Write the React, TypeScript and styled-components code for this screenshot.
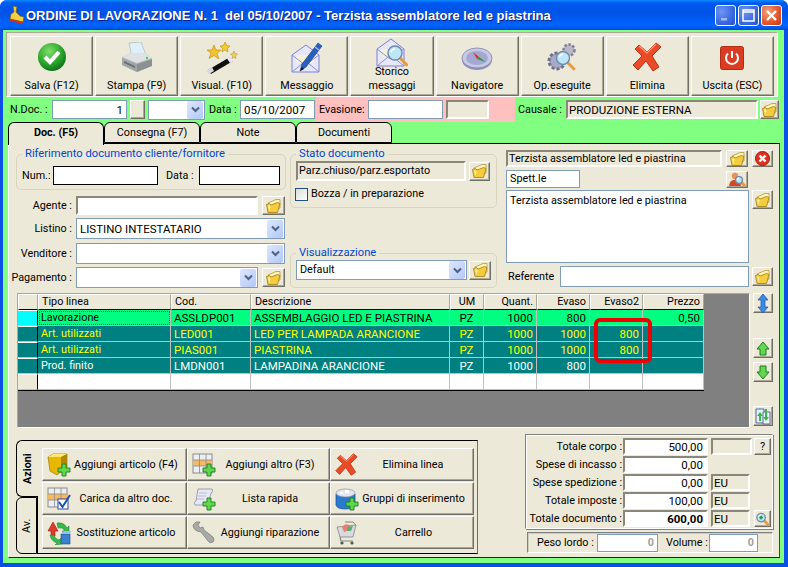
import React from 'react';
import styled, {createGlobalStyle, css} from 'styled-components';

const GlobalStyle = createGlobalStyle`
  html, body { margin: 0; padding: 0; background: #fff; }
  * { box-sizing: border-box; }
  body { font-family: Roboto, "Liberation Sans", Arial, sans-serif; font-size: 10.8px; line-height: 14px; color: #000; }
`;

const bevel = css`
  background: #ece9d8;
  border: 1px solid;
  border-color: #fff #716f64 #716f64 #fff;
  box-shadow: inset -1px -1px 0 #aca899;
`;
const sunken = css`
  border: 2px solid;
  border-color: #8a8778 #fff #fff #8a8778;
`;

const Window = styled.div`
  width: 788px;
  height: 567px;
  overflow: hidden;
  display: flex;
  flex-direction: column;
  border-radius: 7px 7px 0 0;
  background-color: #0a4fe6;
`;
const TitleBar = styled.div`
  height: 30px;
  flex: none;
  display: flex;
  align-items: center;
  padding: 0 6px 0 8px;
  background-image: linear-gradient(180deg, #0a8cff 0, #0058ee 10%, #0053e6 45%, #0064ff 85%, #0058f0 94%, #003dd0 100%);
`;
const TitleText = styled.div`
  flex: 1;
  margin-left: 1px;
  font: bold 13px "Liberation Sans", Arial, sans-serif;
  color: #fff;
  white-space: pre;
  text-shadow: 1px 1px 0 #0f1f80;
`;
const CaptionBtn = styled.div<{$red?: boolean}>`
  width: 21px;
  height: 21px;
  margin-left: 2px;
  border: 1px solid #fff;
  border-radius: 3px;
  display: flex;
  align-items: center;
  justify-content: center;
  background: ${p => p.$red
    ? 'radial-gradient(circle at 30% 30%, #f0a080, #e0562c 60%, #c23a14)'
    : 'radial-gradient(circle at 30% 30%, #6f96f2, #3a68e0 60%, #2a52c8)'};
`;
const Body = styled.div`
  flex: 1;
  min-height: 0;
  margin: 0 4px 4px 3px;
  padding: 2px 3px 5px 3px;
  background: #80ff80;
  display: flex;
  flex-direction: column;
`;
const Toolbar = styled.div`
  width: 772px;
  height: 65px;
  flex: none;
  background: #ece9d8;
  border: 1px solid;
  border-color: #aca899 #fff #fff #aca899;
  padding: 3px 3px 0;
  display: grid;
  grid-template-columns: repeat(9, 1fr);
  gap: 2px;
`;
const ToolBtn = styled.div`
  ${bevel};
  height: 60px;
  display: flex;
  flex-direction: column;
  align-items: center;
  justify-content: flex-end;
  padding-bottom: 2px;
  text-align: center;
`;
const ToolIcon = styled.div<{$gap: number}>`
  height: 32px;
  margin-bottom: ${p => p.$gap}px;
`;
const DocRow = styled.div`
  height: 25px;
  flex: none;
  display: flex;
  align-items: center;
  padding-left: 4px;
`;
const RowLabel = styled.div<{$w: number; $ml?: number}>`
  width: ${p => p.$w}px;
  margin-left: ${p => p.$ml || 0}px;
  flex: none;
  white-space: nowrap;
`;
const PinkZone = styled.div`
  width: 199px;
  height: 25px;
  margin-left: 1px;
  padding-left: 3px;
  flex: none;
  background: #ffc0c0;
  display: flex;
  align-items: center;
`;
const Field = styled.div<{$w?: number; $h?: number; $right?: boolean; $ml?: number; $top?: boolean; $large?: boolean}>`
  ${p => p.$w ? `width:${p.$w}px;flex:none;` : 'flex:1;min-width:0;'}
  height: ${p => p.$h || 19}px;
  margin-left: ${p => p.$ml || 0}px;
  padding: 0 3px;
  background: #fff;
  border: 1px solid #7f9db9;
  display: flex;
  align-items: ${p => p.$top ? 'flex-start' : 'center'};
  justify-content: ${p => p.$right ? 'flex-end' : 'flex-start'};
  white-space: nowrap;
  ${p => p.$large && 'font-size: 11.5px;'}
  ${p => p.$top && 'padding-top: 3px;'}
`;
const BlackField = styled(Field)`
  border-color: #000;
`;
const ReadOnly = styled(Field)`
  ${sunken};
  background: #ece9d8;
  padding: 0 1px;
`;
const WhiteSunken = styled(Field)`
  ${sunken};
`;
const Btn = styled.div<{$w: number; $h: number; $ml?: number}>`
  ${bevel};
  width: ${p => p.$w}px;
  height: ${p => p.$h}px;
  margin-left: ${p => p.$ml || 0}px;
  flex: none;
  display: flex;
  align-items: center;
  justify-content: center;
`;
const ComboBox = styled(Field)`
  padding: 0 1px 0 3px;
  justify-content: space-between;
`;
const ComboArrow = styled.div`
  width: 16px;
  height: 18px;
  margin-left: auto;
  flex: none;
  border-radius: 2px;
  background: linear-gradient(135deg, #dde6fd, #b3c8f8);
  display: flex;
  align-items: center;
  justify-content: center;
`;
const TabStrip = styled.div`
  height: 21px;
  flex: none;
  display: flex;
  padding-left: 2px;
`;
const Tab = styled.div<{$active?: boolean}>`
  width: 96px;
  background: #ece9d8;
  border: 1px solid #000;
  border-radius: 6px 6px 0 0;
  display: flex;
  align-items: center;
  justify-content: center;
  ${p => p.$active && `
    font-weight: bold;
    border-bottom: 0;
    margin-bottom: -2px;
    z-index: 1;
    padding-bottom: 2px;
  `}
`;
const Page = styled.div`
  width: 772px;
  height: 415px;
  margin-left: 2px;
  flex: none;
  background: #ece9d8;
  border: 1px solid;
  border-color: #000 #404040 #202020 #fff;
  display: flex;
  flex-direction: column;
  padding-left: 7px;
`;
const FormArea = styled.div`
  height: 145px;
  flex: none;
  display: flex;
`;
const LeftCol = styled.div`
  width: 269px;
  padding-top: 3px;
  flex: none;
  display: flex;
  flex-direction: column;
`;
const MidCol = styled.div`
  width: 207px;
  margin-left: 5px;
  padding-top: 3px;
  flex: none;
  display: flex;
  flex-direction: column;
`;
const RightCol = styled.div`
  width: 267px;
  margin-left: 9px;
  padding-top: 6px;
  flex: none;
  display: flex;
  flex-direction: column;
`;
const Group = styled.fieldset<{$h: number; $mt?: number}>`
  margin: ${p => p.$mt || 0}px 0 0;
  height: ${p => p.$h}px;
  padding: 0 5px;
  border: 1px solid #d8d4c0;
  border-radius: 5px;
  flex: none;
`;
const GroupLegend = styled.legend`
  padding: 0 3px;
  font-size: 11.2px;
  color: #0046d5;
`;
const FlexRow = styled.div<{$mt?: number; $h?: number}>`
  display: flex;
  align-items: ${p => p.$h ? 'flex-start' : 'center'};
  margin-top: ${p => p.$mt || 0}px;
  ${p => p.$h && `height:${p.$h}px;`}
`;
const FormLabel = styled.div`
  width: 60px;
  flex: none;
  padding-right: 4px;
  display: flex;
  justify-content: flex-end;
  white-space: nowrap;
`;
const CheckBox = styled.div`
  width: 13px;
  height: 13px;
  flex: none;
  background: linear-gradient(135deg, #dcdcd7, #fff);
  border: 1px solid #1c5180;
  margin: 0 3px 0 -1px;
`;
const TableArea = styled.div`
  height: 135px;
  flex: none;
  margin: 4px 0 0 1px;
  display: flex;
`;
const GridPanel = styled.div`
  position: relative;
  width: 733px;
  background: #808080;
  border: 1px solid;
  border-color: #aca899 #fff #fff #aca899;
`;
const DataGrid = styled.div`
  width: 686px;
  display: grid;
  grid-template-columns: 20px 133px 80px 199px 34px 53px 53px 53px 61px;
  grid-auto-rows: 16px;
  background: #fff;
  border-right: 1px solid #000;
  border-bottom: 1px solid #000;
`;
const HeadCell = styled.div<{$align?: string}>`
  ${bevel};
  box-shadow: none;
  border-color: #fff #aca899 #000 #fff;
  padding: 0 3px;
  display: flex;
  align-items: center;
  justify-content: ${p => p.$align || 'flex-start'};
`;
const Indicator = styled.div<{$bg: string}>`
  background: ${p => p.$bg};
  border-top: 1px solid #fff;
  border-bottom: 1px solid #c0c0c0;
  border-right: 1px solid #000;
`;
const rowColors = {
  green: {bg: '#00ff80', fg: '#000'},
  yellow: {bg: '#008080', fg: '#ffff00'},
  white: {bg: '#008080', fg: '#fff'},
  empty: {bg: '#fff', fg: '#000'},
};
const Cell = styled.div<{$kind: keyof typeof rowColors; $right?: boolean; $center?: boolean; $focus?: boolean; $large?: boolean}>`
  background: ${p => rowColors[p.$kind].bg};
  color: ${p => rowColors[p.$kind].fg};
  border-right: 1px solid #c0c0c0;
  border-bottom: 1px solid #c0c0c0;
  padding: 0 3px;
  display: flex;
  align-items: center;
  white-space: nowrap;
  overflow: hidden;
  justify-content: ${p => p.$right ? 'flex-end' : p.$center ? 'center' : 'flex-start'};
  ${p => p.$large && 'font-size: 11.5px;'}
  ${p => p.$focus && 'outline: 1px dotted #ff0060; outline-offset: -2px;'}
`;
const Highlight = styled.div`
  position: absolute;
  left: 576px;
  top: 24px;
  width: 58px;
  height: 45px;
  border: 4px solid #f00000;
  border-radius: 6px;
`;
const SideButtons = styled.div`
  margin-left: 3px;
  display: flex;
  flex-direction: column;
`;
const SideBtn = styled(Btn)<{$mt?: number}>`
  margin-top: ${p => p.$mt || 0}px;
`;
const BottomArea = styled.div`
  margin: 6px 0 0;
  height: 120px;
  flex: none;
  display: flex;
`;
const ActionBlock = styled.div`
  width: 462px;
  height: 114px;
  margin-top: 6px;
  flex: none;
  display: flex;
`;
const SideTabs = styled.div`
  width: 21px;
  flex: none;
  display: flex;
  flex-direction: column;
`;
const SideTab = styled.div<{$active?: boolean}>`
  height: 57px;
  border: 1px solid #000;
  background: #ece9d8;
  writing-mode: vertical-rl;
  transform: rotate(180deg);
  transform-origin: center;
  display: flex;
  align-items: center;
  justify-content: center;
  border-radius: 0 6px 6px 0;
  ${p => p.$active ? 'font-weight: bold; border-left: 0; margin-right: -1px; z-index: 1; width: 22px;' : ''}
`;
const ActionPanel = styled.div`
  flex: 1;
  border: 1px solid;
  border-color: #000 #716f64 #000 #000;
  padding: 7px 2px 0 4px;
  display: grid;
  grid-template-columns: 145px 143px 144px;
  grid-auto-rows: 33px;
  gap: 1px 0;
`;
const ActionBtn = styled.div`
  ${bevel};
  display: flex;
  align-items: center;
  padding: 0 5px 0 4px;
  white-space: nowrap;
`;
const ActionText = styled.div`
  flex: 1;
  text-align: center;
`;
const TotalsCol = styled.div`
  margin-left: 47px;
  width: 248px;
  flex: none;
  display: flex;
  flex-direction: column;
`;
const TotalsBox = styled.div`
  height: 95px;
  border: 1px solid;
  border-color: #808080 #fff #fff #808080;
  box-shadow: inset 1px 1px 0 #fff, 1px 1px 0 #808080;
  padding: 3px 0 0;
  display: flex;
  flex-direction: column;
  gap: 1px;
`;
const TotalRow = styled.div`
  height: 17px;
  display: flex;
  align-items: center;
`;
const TotalLabel = styled.div`
  width: 97px;
  flex: none;
  display: flex;
  justify-content: flex-end;
  white-space: nowrap;
  padding-right: 1px;
`;
const BoldValue = styled.b`
  font-weight: bold;
`;
const WeightBox = styled.div`
  height: 21px;
  width: 246px;
  margin: 3px 0 0 2px;
  border: 1px solid;
  border-color: #808080 #fff #fff #808080;
  box-shadow: inset 1px 1px 0 #d0cdb8;
  display: flex;
  align-items: center;
  padding-left: 9px;
`;
const GreyValue = styled.span`
  color: #a0a0a0;
  font-weight: bold;
`;

function Folder() {
  return (
    <svg width="17" height="16" viewBox="0 0 17 16">
      <path d="M3 5 L11 1.5 L15 1.5 L15 10 L7 13 Z" fill="#fff4b8" stroke="#b08a20" strokeWidth=".7"/>
      <path d="M1.5 6.5 L3 14.5 L12.5 14.5 L15 5.5 L12.5 4.5 L6 7 L4.5 5.5 Z" fill="#f5cd3c" stroke="#a07c14" strokeWidth=".8"/>
      <path d="M3 7.5 L5.5 8 L4.5 13 Z" fill="#fff2b0"/>
    </svg>
  );
}

function Chevron() {
  return (
    <svg width="9" height="7" viewBox="0 0 9 7">
      <path d="M1 1.5 L4.5 5 L8 1.5" fill="none" stroke="#4d6185" strokeWidth="2"/>
    </svg>
  );
}

function CheckIcon() {
  return (
    <svg width="30" height="30" viewBox="0 0 30 30">
      <defs>
        <radialGradient id="chk" cx="40%" cy="30%" r="75%">
          <stop offset="0" stopColor="#7fe06a"/>
          <stop offset=".6" stopColor="#2aa52a"/>
          <stop offset="1" stopColor="#0b6b1a"/>
        </radialGradient>
      </defs>
      <circle cx="15" cy="15" r="14" fill="url(#chk)"/>
      <path d="M8 15 L13 20 L22 10" fill="none" stroke="#fff" strokeWidth="4"/>
    </svg>
  );
}

function PrinterIcon() {
  return (
    <svg width="32" height="32" viewBox="0 0 32 32">
      <path d="M8 1 L20 0 L25 13 L11 15 Z" fill="#dff0fb" stroke="#9fb0c0" strokeWidth=".6"/>
      <path d="M1 15 L10 11 L24 11 L31 16 L31 24 L16 30 L1 23 Z" fill="#b9bcbf"/>
      <path d="M1 15 L16 21 L31 16 L24 11 L10 11 Z" fill="#dfe1e3"/>
      <path d="M1 16 L16 22 L16 30 L1 23 Z" fill="#a2a5a8"/>
      <path d="M16 22 L31 17 L31 24 L16 30 Z" fill="#8d9093"/>
      <path d="M3 19 L14 24 L14 26 L3 21 Z" fill="#6c6f72"/>
      <circle cx="26" cy="16" r="1.2" fill="#3fd04a"/>
    </svg>
  );
}

function WandIcon() {
  return (
    <svg width="32" height="32" viewBox="0 0 32 32">
      <path d="M2 28 L24 15 L27 19 L5 32 Z" fill="#111"/>
      <path d="M0 29 L6 25 L8 29 L3 32 Z" fill="#d8d8e0"/>
      <path d="M21 16.5 L25 14 L28 18.5 L24 21 Z" fill="#e8e8f0"/>
      <path d="M8 3 L10 8 L15 8 L11 11.5 L13 17 L8 13.5 L3 16.5 L5 11 L1 8 L6 8 Z" fill="#f4c22c" stroke="#b78a10" strokeWidth=".6"/>
      <path d="M19 0 L20.5 3.5 L24 4 L21.5 6.5 L22 10 L19 8 L16 10 L16.5 6.5 L14 4 L17.5 3.5 Z" fill="#f6ca34" stroke="#b78a10" strokeWidth=".6"/>
      <path d="M28 9 L29 11.5 L31.5 12 L29.5 14 L30 16.5 L28 15 L26 16.5 L26.5 14 L24.5 12 L27 11.5 Z" fill="#f0d060" stroke="#b78a10" strokeWidth=".5"/>
    </svg>
  );
}

function EnvelopeBase() {
  return (
    <>
      <path d="M1 13 L15 3 L28 13 L28 30 L1 30 Z" fill="#e6e8fa" stroke="#7c80d8" strokeWidth="1"/>
      <path d="M5 13 L23 13 L23 20 L14 24 L5 20 Z" fill="#f7f1d8"/>
      <path d="M1 13 L14 23 L28 13 M1 30 L12 21 M28 30 L17 21" fill="none" stroke="#8a8fe0" strokeWidth="1"/>
    </>
  );
}

function MessageIcon() {
  return (
    <svg width="32" height="32" viewBox="0 0 32 32">
      <EnvelopeBase/>
      <path d="M9 29 L11 22 L27 1 L31 4 L15 25 Z" fill="#2a5fc0" stroke="#123a80" strokeWidth=".6"/>
      <path d="M24 5 L28 8" stroke="#9fc0f0" strokeWidth="1.2"/>
      <path d="M9 29 L11 25 L13 27 Z" fill="#111"/>
    </svg>
  );
}

function Lens({cx, cy, r}: {cx: number; cy: number; r: number}) {
  return (
    <>
      <path d={`M${cx + r * .7} ${cy + r * .7} L${cx + r * 1.8} ${cy + r * 1.8}`} stroke="#e89a40" strokeWidth="3"/>
      <circle cx={cx} cy={cy} r={r} fill="#bfe6f6" stroke="#6e8aa8" strokeWidth="1.4"/>
      <path d={`M${cx - r * .6} ${cy - r * .1} Q${cx - r * .4} ${cy - r * .6} ${cx} ${cy - r * .6}`} stroke="#fff" strokeWidth="1.2" fill="none"/>
    </>
  );
}

function StoricoIcon() {
  return (
    <svg width="32" height="32" viewBox="0 0 32 32">
      <EnvelopeBase/>
      <Lens cx={19} cy={17} r={7}/>
    </svg>
  );
}

function CompassIcon() {
  return (
    <svg width="32" height="32" viewBox="0 0 32 32">
      <ellipse cx="16" cy="18" rx="15" ry="10" fill="#8f90c0"/>
      <ellipse cx="16" cy="16" rx="15" ry="10" fill="#c8c9e4" stroke="#8284b0" strokeWidth=".8"/>
      <ellipse cx="16" cy="16" rx="11" ry="7" fill="#a6a8d2"/>
      <path d="M12 10 L18 15 L16 17 Z" fill="#d83020"/>
      <path d="M18 15 L25 20 L16 17 Z" fill="#1e9a3c"/>
    </svg>
  );
}

function GearsIcon() {
  return (
    <svg width="32" height="32" viewBox="0 0 32 32">
      <circle cx="11" cy="19" r="8" fill="#a8a9c8" stroke="#6e7090" strokeWidth="3" strokeDasharray="3 2"/>
      <circle cx="23" cy="8" r="5.5" fill="#b8b8c8" stroke="#808098" strokeWidth="2.5" strokeDasharray="2.5 1.6"/>
      <Lens cx={17} cy={16} r={6.5}/>
    </svg>
  );
}

function RedX({size = 30}: {size?: number}) {
  return (
    <svg width={size} height={size} viewBox="0 0 30 30">
      <path d="M7 3 L15 10 L24 1 L29 5 L20 14 L27 25 L21 29 L14 19 L6 28 L1 23 L10 14 L3 7 Z" fill="#ea4a28" stroke="#b83214" strokeWidth="1"/>
      <path d="M7 4 L15 11 L24 2" fill="none" stroke="#ff9a78" strokeWidth="1.2"/>
    </svg>
  );
}

function PowerIcon() {
  return (
    <svg width="24" height="24" viewBox="0 0 24 24">
      <rect x=".5" y=".5" width="23" height="23" rx="2" fill="#dc3c22" stroke="#b02c14"/>
      <path d="M8 7.5 A6 6 0 1 0 16 7.5" fill="none" stroke="#fff" strokeWidth="2"/>
      <path d="M12 5 V12" stroke="#fff" strokeWidth="2"/>
    </svg>
  );
}

function Plus({x, y}: {x: number; y: number}) {
  return (
    <path
      d={`M${x + 4} ${y} h4 v4 h4 v4 h-4 v4 h-4 v-4 h-4 v-4 h4 Z`}
      fill="#5ed84a"
      stroke="#1c7a20"
      strokeWidth=".9"
    />
  );
}

function BoxPlus() {
  return (
    <svg width="24" height="24" viewBox="0 0 24 24">
      <path d="M1 4 L6 1 L20 1 L20 14 L10 22 L3 18 Z" fill="#e8b800" stroke="#9c7a00" strokeWidth=".7"/>
      <path d="M1 4 L14 4 L20 1 L6 1 Z" fill="#ffe878"/>
      <path d="M14 4 L14 20 L20 14 L20 1 Z" fill="#b08800"/>
      <Plus x={11} y={11}/>
    </svg>
  );
}

function TableBase() {
  return (
    <>
      <rect x="1" y="1" width="19" height="19" fill="#eceef4" stroke="#8a8a8a"/>
      <rect x="1" y="7" width="19" height="6" fill="#f6b860"/>
      <path d="M7.5 1 V20 M14 1 V20 M1 7 H20 M1 13 H20" stroke="#8a8a8a" strokeWidth=".8"/>
    </>
  );
}

function TablePlus() {
  return (
    <svg width="24" height="24" viewBox="0 0 24 24">
      <TableBase/>
      <Plus x={11} y={11}/>
    </svg>
  );
}

function TableCheck() {
  return (
    <svg width="24" height="24" viewBox="0 0 24 24">
      <TableBase/>
      <rect x="11" y="12" width="10" height="10" fill="#fff" stroke="#2a4a9c"/>
      <path d="M12 15 L15.5 20 L23 8" fill="none" stroke="#1c50b8" strokeWidth="2"/>
    </svg>
  );
}

function ScrollPlus() {
  return (
    <svg width="24" height="24" viewBox="0 0 24 24">
      <path d="M6 2 L20 2 Q22 5 19 6 L16 18 L3 18 Q1 15 4 14 Z" fill="#e6e8f4" stroke="#8a8ca8" strokeWidth=".8"/>
      <path d="M7 6 H15 M6 9 H14 M5 12 H12" stroke="#b0b2c8" strokeWidth=".8"/>
      <Plus x={11} y={11}/>
    </svg>
  );
}

function BucketPlus() {
  return (
    <svg width="24" height="24" viewBox="0 0 24 24">
      <path d="M1 7 L20 7 L20 18 Q18 22 10 22 Q2 22 1 18 Z" fill="#2a7ad0" stroke="#144a90" strokeWidth=".7"/>
      <ellipse cx="10.5" cy="6" rx="9.5" ry="4" fill="#e4e6ee" stroke="#8a90a8" strokeWidth=".7"/>
      <path d="M5 5 h3 v2 h-3z M10 3 h4 v3 h-4z" fill="#fff"/>
      <Plus x={11} y={11}/>
    </svg>
  );
}

function SwapIcon() {
  return (
    <svg width="24" height="24" viewBox="0 0 24 24">
      <path d="M1 10 L6 1 L11 10 L8 10 L8 15 L4 15 L4 10 Z" fill="#e23a28" stroke="#981c10" strokeWidth=".6"/>
      <path d="M10 2 Q17 1 20 7 L22 5 L22 12 L15 11 L17.5 9 Q15 6 11 7 Z" fill="#38b848" stroke="#1a7a28" strokeWidth=".5"/>
      <path d="M3 14 Q4 20 10 22 L8 24 L15 23 L14 17 L12 19 Q8 18 7 14 Z" fill="#38b848" stroke="#1a7a28" strokeWidth=".5"/>
      <path d="M14 13 L23 13 L23 23 L14 23 Z" fill="#3a80d0" stroke="#1a4a90" strokeWidth=".6"/>
      <path d="M14 13 L17 10 L24 10 L23 13 Z" fill="#90c0f0"/>
    </svg>
  );
}

function WrenchIcon() {
  return (
    <svg width="24" height="24" viewBox="0 0 24 24">
      <path d="M1 4 L4 1 L8 1 L6 4 L8 7 L11 6 L12 9 L21 16 Q23 19 21 21 Q18 23 16 20 L9 11 L5 10 Q1 8 1 4 Z" fill="#a8aaa8" stroke="#767876" strokeWidth=".7"/>
    </svg>
  );
}

function CartIcon() {
  return (
    <svg width="24" height="24" viewBox="0 0 24 24">
      <path d="M2 6 L21 4 L18 16 L5 16 Z" fill="#d8dae0" stroke="#84868c" strokeWidth=".8"/>
      <path d="M7 6 Q10 2 14 4 L17 8 L9 11 Z" fill="#e88070"/>
      <path d="M12 6 L18 5 L16 10 L12 10 Z" fill="#58b070"/>
      <path d="M21 4 L18 1 L10 1" fill="none" stroke="#84868c" strokeWidth="1"/>
      <path d="M5 16 L6 20 H18" fill="none" stroke="#84868c" strokeWidth="1.2"/>
      <circle cx="7" cy="22" r="1.6" fill="#555"/>
      <circle cx="17" cy="22" r="1.6" fill="#555"/>
    </svg>
  );
}

function ArrowBlue() {
  return (
    <svg width="12" height="19" viewBox="0 0 12 19">
      <path d="M6 0 L11 6 L8 6 L8 13 L11 13 L6 19 L1 13 L4 13 L4 6 L1 6 Z" fill="#3a8ae8" stroke="#1a50a8" strokeWidth=".7"/>
    </svg>
  );
}

function ArrowGreen({down}: {down?: boolean}) {
  return (
    <svg width="14" height="15" viewBox="0 0 14 15">
      <path
        d={down ? 'M4 1 H10 V7 H13 L7 14 L1 7 H4 Z' : 'M7 1 L13 8 H10 V14 H4 V8 H1 Z'}
        fill="#62d84e"
        stroke="#1c7a20"
      />
    </svg>
  );
}

function SyncIcon() {
  return (
    <svg width="16" height="18" viewBox="0 0 16 18">
      <path d="M1 2 H9 V16 H1 Z" fill="#e8f0fa" stroke="#4a6a9a"/>
      <path d="M8 5 H15 V17 H8 Z" fill="#f4f8fc" stroke="#4a6a9a"/>
      <path d="M5 5 L8 9 H6 V14 H4 V9 H2 Z" fill="#38b848"/>
      <path d="M11 14 L8 10 H10 V2 H12 V10 H14 Z" fill="#38b848"/>
    </svg>
  );
}

function PersonIcon() {
  return (
    <svg width="17" height="15" viewBox="0 0 17 15">
      <circle cx="6" cy="4" r="3.2" fill="#e89060"/>
      <path d="M0 14 Q1 7 6 8 Q11 7 12 14 Z" fill="#d04a28"/>
      <Lens cx={10} cy={8} r={3.4}/>
    </svg>
  );
}

function RedCircleX() {
  return (
    <svg width="15" height="15" viewBox="0 0 15 15">
      <circle cx="7.5" cy="7.5" r="7" fill="#e03020" stroke="#a01810"/>
      <path d="M4.5 4.5 L10.5 10.5 M10.5 4.5 L4.5 10.5" stroke="#fff" strokeWidth="2.4"/>
    </svg>
  );
}

function SmallZoom() {
  return (
    <svg width="16" height="16" viewBox="0 0 16 16">
      <Lens cx={6.5} cy={6.5} r={4.5}/>
      <path d="M4.5 6.5 H8.5 M6.5 4.5 V8.5" stroke="#1c9a30" strokeWidth="1.6"/>
    </svg>
  );
}

function AppIcon() {
  return (
    <svg width="17" height="20" viewBox="0 0 17 20">
      <path d="M5 1 L9 2 L8 7 L12 11 L16 12 L15 17 L2 14 L3 9 L6 7 Z" fill="#f0d040" stroke="#7a5a10" strokeWidth=".7"/>
      <path d="M2 14 L15 17 L14 19 L2 16 Z" fill="#d03020"/>
    </svg>
  );
}

const tools = [
  {icon: <CheckIcon/>, label: 'Salva (F12)', gap: 5},
  {icon: <PrinterIcon/>, label: 'Stampa (F9)', gap: 5},
  {icon: <WandIcon/>, label: 'Visual. (F10)', gap: 5},
  {icon: <MessageIcon/>, label: 'Messaggio', gap: 5},
  {icon: <StoricoIcon/>, label: <>Storico<br/>messaggi</>, gap: -3},
  {icon: <CompassIcon/>, label: 'Navigatore', gap: 5},
  {icon: <GearsIcon/>, label: 'Op.eseguite', gap: 5},
  {icon: <RedX/>, label: 'Elimina', gap: 5},
  {icon: <PowerIcon/>, label: 'Uscita (ESC)', gap: 1},
];

const actions = [
  {icon: <BoxPlus/>, label: 'Aggiungi articolo (F4)'},
  {icon: <TablePlus/>, label: 'Aggiungi altro (F3)'},
  {icon: <RedX size={23}/>, label: 'Elimina linea'},
  {icon: <TableCheck/>, label: 'Carica da altro doc.'},
  {icon: <ScrollPlus/>, label: 'Lista rapida'},
  {icon: <BucketPlus/>, label: 'Gruppi di inserimento'},
  {icon: <SwapIcon/>, label: 'Sostituzione articolo'},
  {icon: <WrenchIcon/>, label: 'Aggiungi riparazione'},
  {icon: <CartIcon/>, label: 'Carrello'},
];

type Kind = keyof typeof rowColors;
const rows: {kind: Kind; mark: string; vals: string[]}[] = [
  {kind: 'green', mark: '#00ffff', vals: ['Lavorazione', 'ASSLDP001', 'ASSEMBLAGGIO LED E PIASTRINA', 'PZ', '1000', '800', '', '0,50']},
  {kind: 'yellow', mark: '#008080', vals: ['Art. utilizzati', 'LED001', 'LED PER LAMPADA ARANCIONE', 'PZ', '1000', '1000', '800', '']},
  {kind: 'yellow', mark: '#008080', vals: ['Art. utilizzati', 'PIAS001', 'PIASTRINA', 'PZ', '1000', '1000', '800', '']},
  {kind: 'white', mark: '#008080', vals: ['Prod. finito', 'LMDN001', 'LAMPADINA ARANCIONE', 'PZ', '1000', '800', '', '']},
  {kind: 'empty', mark: '#ece9d8', vals: ['', '', '', '', '', '', '', '']},
];
const headers = ['Tipo linea', 'Cod.', 'Descrizione', 'UM', 'Quant.', 'Evaso', 'Evaso2', 'Prezzo'];

function App() {
  return (
    <>
      <GlobalStyle/>
      <Window>
        <TitleBar>
          <AppIcon/>
          <TitleText>ORDINE DI LAVORAZIONE N. 1  del 05/10/2007 - Terzista assemblatore led e piastrina</TitleText>
          <CaptionBtn>
            <svg width="11" height="11" viewBox="0 0 11 11"><rect x="1" y="8" width="6" height="2.5" fill="#9fb8f0"/></svg>
          </CaptionBtn>
          <CaptionBtn>
            <svg width="13" height="13" viewBox="0 0 13 13"><path d="M1 1 H12 V12 H1 Z M1 3 H12" fill="none" stroke="#fff" strokeWidth="1.5"/></svg>
          </CaptionBtn>
          <CaptionBtn $red>
            <svg width="13" height="13" viewBox="0 0 13 13"><path d="M2 2 L11 11 M11 2 L2 11" stroke="#fff" strokeWidth="2.4"/></svg>
          </CaptionBtn>
        </TitleBar>
        <Body>
          <Toolbar>
            {tools.map((t, i) => (
              <ToolBtn key={i}>
                <ToolIcon $gap={t.gap}>{t.icon}</ToolIcon>
                <div>{t.label}</div>
              </ToolBtn>
            ))}
          </Toolbar>
          <DocRow>
            <RowLabel $w={42}>N.Doc. :</RowLabel>
            <Field $w={75} $right $large>1</Field>
            <Btn $w={15} $h={19} $ml={3}/>
            <ComboBox $w={57} $h={20} $ml={3}><ComboArrow><Chevron/></ComboArrow></ComboBox>
            <RowLabel $w={31} $ml={4}>Data :</RowLabel>
            <Field $w={75} $large>05/10/2007</Field>
            <PinkZone>
              <RowLabel $w={49}>Evasione:</RowLabel>
              <Field $w={75}/>
              <ReadOnly $w={43} $ml={3}/>
            </PinkZone>
            <RowLabel $w={48} $ml={3}>Causale :</RowLabel>
            <ReadOnly $w={192} $large>PRODUZIONE ESTERNA</ReadOnly>
            <Btn $w={19} $h={19} $ml={2}><Folder/></Btn>
          </DocRow>
          <TabStrip>
            <Tab $active>Doc. (F5)</Tab>
            <Tab>Consegna (F7)</Tab>
            <Tab>Note</Tab>
            <Tab>Documenti</Tab>
          </TabStrip>
          <Page>
            <FormArea>
              <LeftCol>
                <Group $h={43}>
                  <GroupLegend>Riferimento documento cliente/fornitore</GroupLegend>
                  <FlexRow $mt={5}>
                    <RowLabel $w={31}>Num.:</RowLabel>
                    <BlackField $w={105}/>
                    <RowLabel $w={33} $ml={8}>Data :</RowLabel>
                    <BlackField $w={81}/>
                  </FlexRow>
                </Group>
                <FlexRow $mt={6}>
                  <FormLabel>Agente :</FormLabel>
                  <WhiteSunken/>
                  <Btn $w={23} $h={19} $ml={4}><Folder/></Btn>
                </FlexRow>
                <FlexRow $mt={3}>
                  <FormLabel>Listino :</FormLabel>
                  <ComboBox $h={21} $large>LISTINO INTESTATARIO<ComboArrow><Chevron/></ComboArrow></ComboBox>
                </FlexRow>
                <FlexRow $mt={4}>
                  <FormLabel>Venditore :</FormLabel>
                  <ComboBox $h={21}><ComboArrow><Chevron/></ComboArrow></ComboBox>
                </FlexRow>
                <FlexRow $mt={3}>
                  <FormLabel>Pagamento :</FormLabel>
                  <ComboBox $h={21}><ComboArrow><Chevron/></ComboArrow></ComboBox>
                  <Btn $w={23} $h={19} $ml={4}><Folder/></Btn>
                </FlexRow>
              </LeftCol>
              <MidCol>
                <Group $h={61}>
                  <GroupLegend>Stato documento</GroupLegend>
                  <FlexRow $mt={0}>
                    <ReadOnly $w={170} $h={20}>Parz.chiuso/parz.esportato</ReadOnly>
                    <Btn $w={21} $h={19} $ml={3}><Folder/></Btn>
                  </FlexRow>
                  <FlexRow $mt={6}>
                    <CheckBox/>
                    <span>Bozza / in preparazione</span>
                  </FlexRow>
                </Group>
                <Group $h={42} $mt={38}>
                  <GroupLegend>Visualizzazione</GroupLegend>
                  <FlexRow>
                    <ComboBox $h={20}>Default<ComboArrow><Chevron/></ComboArrow></ComboBox>
                    <Btn $w={22} $h={19} $ml={2}><Folder/></Btn>
                  </FlexRow>
                </Group>
              </MidCol>
              <RightCol>
                <FlexRow>
                  <ReadOnly $w={216} $h={17}>Terzista assemblatore led e piastrina</ReadOnly>
                  <Btn $w={22} $h={17} $ml={4}><Folder/></Btn>
                  <Btn $w={21} $h={17} $ml={4}><RedCircleX/></Btn>
                </FlexRow>
                <FlexRow $mt={3}>
                  <Field $w={74} $h={18}>Spett.le</Field>
                  <Btn $w={22} $h={17} $ml={146}><PersonIcon/></Btn>
                </FlexRow>
                <FlexRow $mt={2} $h={73}>
                  <Field $w={243} $h={73} $top>Terzista assemblatore led e piastrina</Field>
                  <Btn $w={21} $h={19} $ml={3}><Folder/></Btn>
                </FlexRow>
                <FlexRow $mt={3}>
                  <RowLabel $w={52} $ml={2}>Referente</RowLabel>
                  <Field $w={189} $h={21}/>
                  <Btn $w={21} $h={19} $ml={3}><Folder/></Btn>
                </FlexRow>
              </RightCol>
            </FormArea>
            <TableArea>
              <GridPanel>
                <DataGrid>
                  <HeadCell/>
                  {headers.map((h, i) => (
                    <HeadCell key={h} $align={i > 3 ? 'flex-end' : i === 3 ? 'center' : undefined}>{h}</HeadCell>
                  ))}
                  {rows.map((r, ri) => (
                    <React.Fragment key={ri}>
                      <Indicator $bg={r.mark}/>
                      {r.vals.map((v, ci) => (
                        <Cell
                          key={ci}
                          $kind={r.kind}
                          $large={ci > 0}
                          $right={ci > 3}
                          $center={ci === 3}
                          $focus={ri === 0 && ci === 0}
                        >
                          {v}
                        </Cell>
                      ))}
                    </React.Fragment>
                  ))}
                </DataGrid>
                <Highlight/>
              </GridPanel>
              <SideButtons>
                <SideBtn $w={20} $h={20}><ArrowBlue/></SideBtn>
                <SideBtn $w={20} $h={20} $mt={25}><ArrowGreen/></SideBtn>
                <SideBtn $w={20} $h={20} $mt={4}><ArrowGreen down/></SideBtn>
                <SideBtn $w={20} $h={20} $mt={24}><SyncIcon/></SideBtn>
              </SideButtons>
            </TableArea>
            <BottomArea>
              <ActionBlock>
                <SideTabs>
                  <SideTab $active>Azioni</SideTab>
                  <SideTab>Av.</SideTab>
                </SideTabs>
                <ActionPanel>
                  {actions.map(a => (
                    <ActionBtn key={a.label}>
                      {a.icon}
                      <ActionText>{a.label}</ActionText>
                    </ActionBtn>
                  ))}
                </ActionPanel>
              </ActionBlock>
              <TotalsCol>
                <TotalsBox>
                  <TotalRow>
                    <TotalLabel>Totale corpo :</TotalLabel>
                    <WhiteSunken $w={85} $h={17} $right $large>500,00</WhiteSunken>
                    <ReadOnly $w={41} $h={17} $ml={3}/>
                    <Btn $w={17} $h={17} $ml={2}>?</Btn>
                  </TotalRow>
                  <TotalRow>
                    <TotalLabel>Spese di incasso :</TotalLabel>
                    <WhiteSunken $w={85} $h={17} $right $large>0,00</WhiteSunken>
                  </TotalRow>
                  <TotalRow>
                    <TotalLabel>Spese spedizione :</TotalLabel>
                    <WhiteSunken $w={85} $h={17} $right $large>0,00</WhiteSunken>
                    <ReadOnly $w={39} $h={17} $ml={3} $large>EU</ReadOnly>
                  </TotalRow>
                  <TotalRow>
                    <TotalLabel>Totale imposte :</TotalLabel>
                    <WhiteSunken $w={85} $h={17} $right $large>100,00</WhiteSunken>
                    <ReadOnly $w={39} $h={17} $ml={3} $large>EU</ReadOnly>
                  </TotalRow>
                  <TotalRow>
                    <TotalLabel>Totale documento :</TotalLabel>
                    <WhiteSunken $w={85} $h={17} $right $large><BoldValue>600,00</BoldValue></WhiteSunken>
                    <ReadOnly $w={39} $h={17} $ml={3} $large>EU</ReadOnly>
                    <Btn $w={17} $h={17} $ml={4}><SmallZoom/></Btn>
                  </TotalRow>
                </TotalsBox>
                <WeightBox>
                  <RowLabel $w={60}>Peso lordo :</RowLabel>
                  <Field $w={61} $h={18} $right><GreyValue>0</GreyValue></Field>
                  <RowLabel $w={43} $ml={8}>Volume :</RowLabel>
                  <Field $w={49} $h={18} $right><GreyValue>0</GreyValue></Field>
                </WeightBox>
              </TotalsCol>
            </BottomArea>
          </Page>
        </Body>
      </Window>
    </>
  );
}

export default App;
